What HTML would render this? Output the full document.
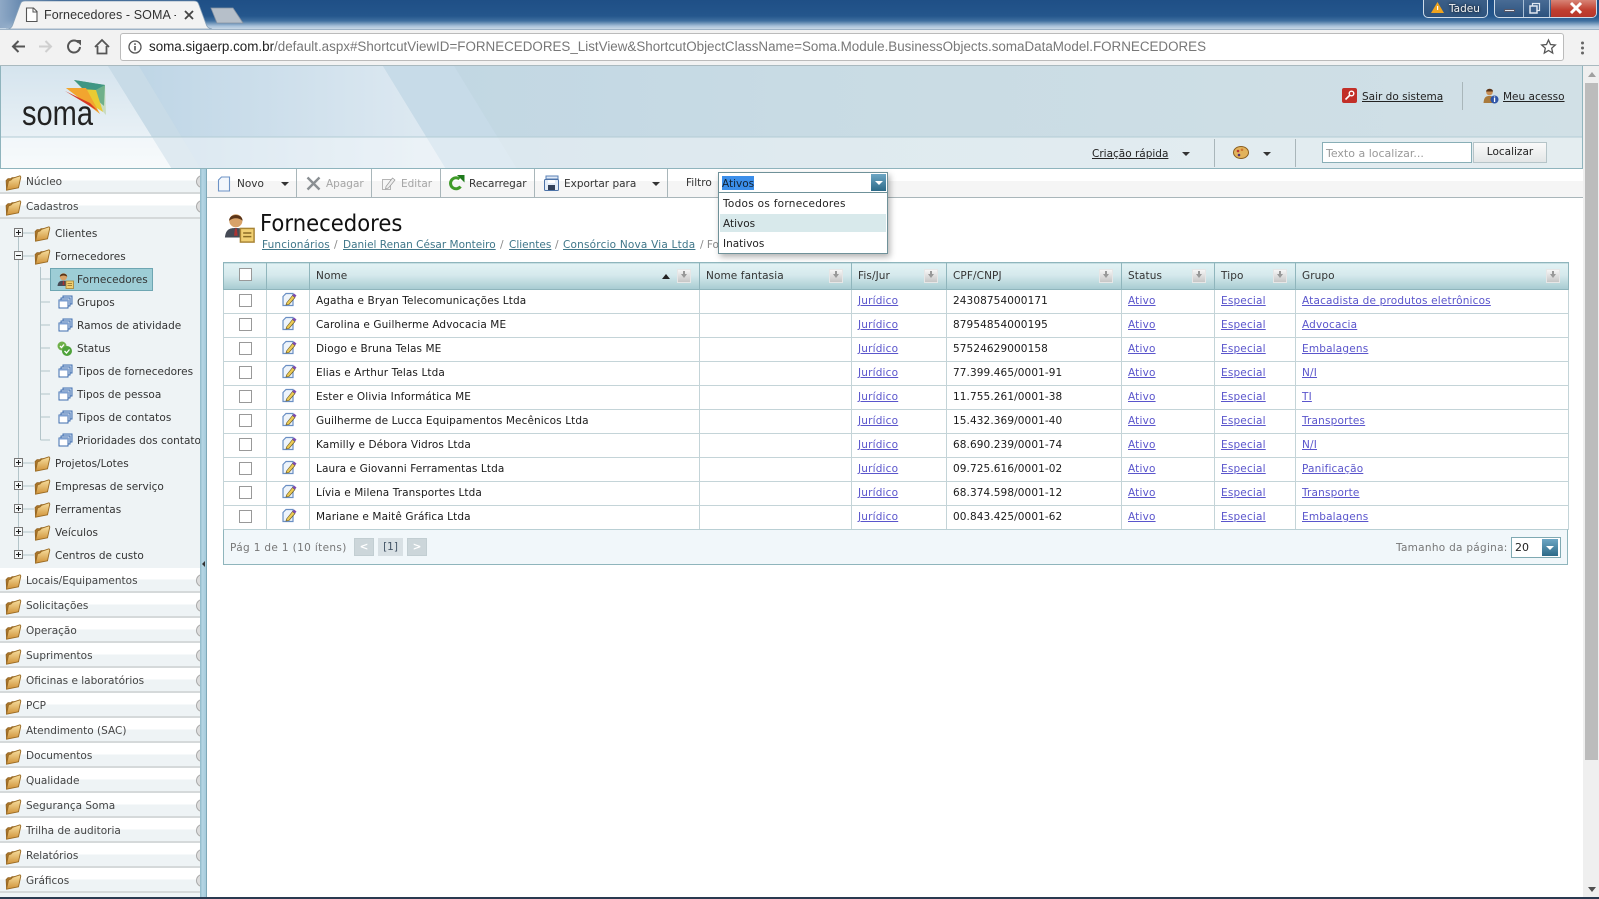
<!DOCTYPE html>
<html><head><meta charset="utf-8"><title>Fornecedores - SOMA</title>
<style>
*{box-sizing:border-box}
html,body{margin:0;padding:0;width:1599px;height:899px;overflow:hidden;background:#fff}
body{position:relative;font:10.5px "DejaVu Sans",sans-serif;color:#222}
.a{position:absolute;white-space:nowrap;line-height:14px}
.u{text-decoration:underline}
svg{position:absolute;overflow:visible}
.grp{position:absolute;left:0;width:200px;height:25px;border-bottom:2px solid #d5d9da;background:linear-gradient(#fff 0,#fff 50%,#eef3f5 50%,#eef3f5 100%)}
.grp span{position:absolute;left:26px;top:6px;line-height:14px;color:#444}
.grp svg{left:5px;top:6px}
.grp i{position:absolute;left:196px;top:6px;width:8px;height:13px;border-radius:7px 0 0 7px;background:#ddd;border:1px solid #aaa}
.t{position:absolute;white-space:nowrap;line-height:14px;color:#333}
.s .t,.s svg{margin-top:1px}
.sep{position:absolute;width:1px;background:#a9b6ba}
.arr{position:absolute;width:0;height:0;border-left:4px solid transparent;border-right:4px solid transparent;border-top:4px solid #333}
table{position:absolute;left:223px;top:262px;width:1345px;border-collapse:collapse;table-layout:fixed;font-size:10.5px;letter-spacing:.1px}
th{height:27px;padding:0 0 0 6px;text-align:left;font-weight:normal;background:linear-gradient(#e2f2f4,#d5e9ec 45%,#a7cbd1);border:1px solid #8fb5bc;position:relative;color:#333}
td{height:24px;padding:0 0 1px 6px;border:1px solid #c4d4d8;white-space:nowrap;color:#1a1a1a}
td a{color:#5a55cc;text-decoration:underline;letter-spacing:.18px}
th b{position:absolute;top:6px;right:8px;width:14px;height:14px;background:linear-gradient(#f6f6f6,#c6c6c6);border:1px solid #e6e6e6}
th b:after{content:"";position:absolute;left:3px;top:4px;width:0;height:0;border-left:3px solid transparent;border-right:3px solid transparent;border-top:4px solid #999}
th b:before{content:"";position:absolute;left:5px;top:1px;width:2px;height:3px;background:#999}
.c{display:block;position:relative;top:-1px;width:13px;height:13px;border:1px solid #999;background:#fff;margin-left:9px}
.e{position:relative;top:-2px;display:block;width:15px;height:15px;margin-left:9px}
</style></head><body>
<svg width="0" height="0" style="position:absolute"><defs>
<linearGradient id="fg" x1="0" y1="0" x2="0" y2="1"><stop offset="0" stop-color="#f8e0a0"/><stop offset="1" stop-color="#cf9238"/></linearGradient>
<linearGradient id="h1" x1="0" y1="0" x2="1" y2="0"><stop offset="0" stop-color="#bfd6e6"/><stop offset="1" stop-color="#dfeaf2"/></linearGradient>
<linearGradient id="h2" x1="0" y1="0" x2="1" y2="0"><stop offset="0" stop-color="#bad2e2"/><stop offset=".5" stop-color="#c8dbe4"/><stop offset="1" stop-color="#d1e0e6"/></linearGradient>
<linearGradient id="h3" x1="0" y1="0" x2="0" y2="1"><stop offset="0" stop-color="#d5e4ee"/><stop offset="1" stop-color="#f1f6f9"/></linearGradient>
<symbol id="folder" viewBox="0 0 17 17"><path d="M1.500 15 1 5.500 3 3.500 6 3.500 7 2.500 10 2.500 10 5z" fill="#a9742a" stroke="#8a5e20" stroke-width=".6"/><path d="M1.500 15.200 3.500 6 6 5 7.500 3.300 15 .8 15.800 2 13.500 12.800z" fill="url(#fg)" stroke="#9a6a22" stroke-width=".9" stroke-linejoin="round"/></symbol>
<symbol id="stack" viewBox="0 0 15 15"><rect x="5" y="1" width="9" height="8" fill="#cfdff2" stroke="#3f6cae"/><rect x="3" y="3" width="9" height="8" fill="#dfeaf7" stroke="#3f6cae"/><rect x="1" y="5" width="9" height="8" fill="#fff" stroke="#3f6cae"/><rect x="1" y="5" width="9" height="1.500" fill="#7d9fd0"/></symbol>
<symbol id="user" viewBox="0 0 17 17"><circle cx="6.500" cy="4.800" r="3.600" fill="#d8a268"/><path d="M2.800 4.800C2.800.6 10.200.6 10.200 4.800 8 3 5 3 2.800 4.800z" fill="#5a3418"/><path d="M.5 14C1 9.500 3 8.800 6.500 8.800S12 9.500 12.500 14z" fill="#454a55"/><path d="M6 9h1l.5 4h-2z" fill="#a33"/><rect x="9" y="9" width="7.500" height="7.500" fill="#f0cf72" stroke="#a88434" stroke-width=".8"/><path d="M10.500 11.500h4.500M10.500 13.500h4.500" stroke="#8a6c24" stroke-width=".8"/></symbol>
<symbol id="edit" viewBox="0 0 15 15"><path d="M1 4.500 4 1.500H11V13.500H1z" fill="#eef4fb" stroke="#6a8fc4" stroke-width="1.200"/><path d="M4.500 11 10.500 3.500 13 5.500 7 12.500 4 13z" fill="#edcb55" stroke="#5f5020" stroke-width=".6"/><path d="M10.500 3.500 12 1.500 14.500 3.500 13 5.500z" fill="#7d4bb0"/></symbol>
</defs></svg>

<!-- browser chrome -->
<div style="position:absolute;left:0;top:0;width:1599px;height:29px;background:linear-gradient(#1f4f86 0,#24568c 55%,#3f6f9f 72%,#a9c2da 90%,#c9d8e6 100%)"></div>
<div style="position:absolute;left:0;top:0;width:60px;height:28px;background:linear-gradient(90deg,#8fa9c6,rgba(143,169,198,0))"></div>
<svg style="left:0;top:0" width="260" height="30"><path d="M211 8 233 8 243 23 217 23z" fill="#b6bfc9" stroke="#8794a3" stroke-width=".8"/><path d="M6 29C11 29 12 27 13 24L20 5C21 2 22 1 25 1H194C197 1 198 2 199 5L206 24C207 27 208 28 212 29z" fill="#f2f2f2" stroke="#86a0b8" stroke-width=".8"/></svg>
<svg style="left:25px;top:7px" width="13" height="16"><path d="M1.500 1h7l3.500 3.500v10H1.500z" fill="#fff" stroke="#555" stroke-width="1.100"/><path d="M8 1v4h4" fill="none" stroke="#555"/></svg>
<div class="a" style="left:44px;top:8px;font:12.5px/14px 'Liberation Sans',sans-serif;color:#333;width:132px;overflow:hidden;letter-spacing:.1px">Fornecedores - SOMA - Sistema</div>
<svg style="left:184px;top:10px" width="10" height="10"><path d="M1 1 9 9M9 1 1 9" stroke="#444" stroke-width="1.800"/></svg>

<div style="position:absolute;left:1423px;top:-2px;width:65px;height:20px;border:1px solid #cfdcea;border-radius:0 0 5px 5px;background:linear-gradient(#3c5f88,#2e537d)"></div>
<svg style="left:1431px;top:2px" width="14" height="11"><path d="M6.500 0 13 11H0z" fill="#f0a41f"/><rect x="6" y="4" width="1.200" height="4" fill="#fff"/></svg>
<div class="a" style="left:1449px;top:2px;font:10.5px/14px 'DejaVu Sans',sans-serif;color:#f4f4f4;text-shadow:0 0 3px #000">Tadeu</div>
<div style="position:absolute;left:1494px;top:-2px;width:103px;height:20px;border:1px solid #cfdcea;border-radius:0 0 5px 5px;overflow:hidden;background:linear-gradient(#4a6d96,#2c527e)"><div style="position:absolute;left:28px;top:0;width:27px;height:20px;border-left:1px solid #a9bfd6;border-right:1px solid #a9bfd6"></div><div style="position:absolute;left:56px;top:0;width:47px;height:20px;background:linear-gradient(#d98a7c,#c13f30 55%,#b3332a)"></div></div>
<div style="position:absolute;left:1504px;top:9px;width:11px;height:3px;background:#dfe6ef;border:1px solid #556"></div>
<svg style="left:1529px;top:3px" width="12" height="11"><rect x="3.500" y=".5" width="7" height="7" fill="none" stroke="#dfe6ef" stroke-width="1.200"/><rect x="1" y="3" width="7" height="7" fill="#3b5f8a" stroke="#dfe6ef" stroke-width="1.500"/></svg>
<svg style="left:1569px;top:2px" width="14" height="12"><path d="M2 1 12 11M12 1 2 11" stroke="#fff" stroke-width="3"/></svg>

<div style="position:absolute;left:0;top:29px;width:1599px;height:37px;background:#f2f2f2;border-top:1px solid #9db2c6;border-bottom:1px solid #a9b9bf"></div>
<svg style="left:10px;top:38px" width="110" height="20">
<path d="M15 8.500H3M8.500 3 3 8.500 8.500 14" fill="none" stroke="#555" stroke-width="2"/>
<path d="M29 8.500h12M35.500 3 41 8.500 35.500 14" fill="none" stroke="#cfcfcf" stroke-width="2"/>
<g transform="translate(-4 0)"><path d="M72.500 4.500A6 6 0 1 0 74 9" fill="none" stroke="#555" stroke-width="2"/><path d="M69 2h6v5.500z" fill="#555"/></g>
<path d="M85 9 92 2l7 7M87.500 8v7.500h9V8" fill="none" stroke="#555" stroke-width="1.800"/></svg>
<div style="position:absolute;left:120px;top:33px;width:1444px;height:28px;background:#fff;border:1px solid #bbb;border-radius:3px"></div>
<svg style="left:128px;top:40px" width="14" height="14"><circle cx="7" cy="7" r="6" fill="none" stroke="#555" stroke-width="1.300"/><rect x="6.200" y="6" width="1.600" height="4.500" fill="#555"/><rect x="6.200" y="3.300" width="1.600" height="1.600" fill="#555"/></svg>
<div class="a" style="left:149px;top:39px;font:13.4px/16px 'Liberation Sans',sans-serif;color:#777;width:1065px"><span style="color:#222">soma.sigaerp.com.br</span>/default.aspx#ShortcutViewID=FORNECEDORES_ListView&amp;ShortcutObjectClassName=Soma.Module.BusinessObjects.somaDataModel.FORNECEDORES</div>
<svg style="left:1541px;top:39px" width="15" height="15"><path d="M7.500 1 9.500 5.500 14.300 6 10.700 9.200 11.700 14 7.500 11.500 3.300 14 4.300 9.200.7 6 5.500 5.500z" fill="none" stroke="#555" stroke-width="1.300"/></svg>
<svg style="left:1580px;top:40px" width="6" height="16"><circle cx="2.500" cy="3" r="1.500" fill="#666"/><circle cx="2.500" cy="8" r="1.500" fill="#666"/><circle cx="2.500" cy="13" r="1.500" fill="#666"/></svg>

<!-- header -->
<svg style="left:0;top:66px" width="1584" height="103">
<rect width="1584" height="103" fill="url(#h2)"/>
<path d="M0 0H108L172 103H0z" fill="url(#h3)"/>
<path d="M108 0H139L201 103H172z" fill="#c8dbe7"/>
<path d="M139 0H383L446 103H201z" fill="url(#h1)"/>
<path d="M383 0H454L517 103H446z" fill="#c7dbe8"/>
<rect y="71" width="1584" height="32" fill="#fff" fill-opacity=".42"/>
<path d="M0 71H1584" stroke="#b3ccd5"/><path d="M.5 0V102.500H1582.500V0" fill="none" stroke="#8fb4bd"/>
</svg>
<svg style="left:18px;top:76px" width="100" height="60">
<path d="M56 4 87 9 88 39z" fill="#c9dcc0"/><path d="M56 4 87 9 86 30z" fill="#6fb08a"/><path d="M56 4 87 9 70 18z" fill="#3f9684"/><path d="M48 12 78 14 85 36z" fill="#eacb33"/><path d="M48 12 68 12 82 38z" fill="#f2a52f"/><path d="M47 15 72 27 80 35z" fill="#d83a24"/>
<text x="4" y="49" font-family="Liberation Sans" font-size="35" fill="#222" textLength="71" lengthAdjust="spacingAndGlyphs">soma</text></svg>
<svg style="left:1342px;top:88px" width="15" height="15"><rect width="15" height="15" rx="2" fill="#c22f28"/><circle cx="9.500" cy="5.500" r="2.300" fill="none" stroke="#fff" stroke-width="1.400"/><path d="M8 7 3.500 11.500" stroke="#fff" stroke-width="1.600"/></svg>
<div class="a u" style="left:1362px;top:90px;color:#222">Sair do sistema</div>
<div class="sep" style="left:1462px;top:82px;height:28px"></div>
<svg style="left:1483px;top:88px" width="16" height="16"><circle cx="6.500" cy="4" r="3.300" fill="#c98f55"/><path d="M3 3.500C3.500 0 10 0 10 3.500z" fill="#5a3418"/><path d="M.5 15C1 9 3 8 6.500 8S11 9 12 15z" fill="#a97a3c"/><circle cx="11.500" cy="11.500" r="4" fill="#2e55a8"/><rect x="10.900" y="10" width="1.300" height="4" fill="#fff"/><rect x="10.900" y="8.500" width="1.300" height="1" fill="#fff"/></svg>
<div class="a u" style="left:1503px;top:90px;color:#222">Meu acesso</div>
<div class="a u" style="left:1092px;top:147px;color:#222">Criação rápida</div>
<div class="arr" style="left:1182px;top:152px"></div>
<div class="sep" style="left:1214px;top:139px;height:28px"></div>
<svg style="left:1233px;top:146px" width="16" height="13"><ellipse cx="8" cy="6.500" rx="7.500" ry="6" fill="#e2b35c" stroke="#8a5e20"/><circle cx="5" cy="5" r="1.300" fill="#b33"/><circle cx="9" cy="3.800" r="1.300" fill="#c73"/><circle cx="6" cy="9" r="1.300" fill="#537"/></svg>
<div class="arr" style="left:1263px;top:152px"></div>
<div class="sep" style="left:1295px;top:139px;height:28px"></div>
<div class="a" style="left:1322px;top:142px;width:150px;height:21px;background:#fff;border:1px solid #88aeb6;color:#999;padding:4px 3px;font-size:11px">Texto a localizar...</div>
<div class="a" style="left:1473px;top:142px;width:74px;height:21px;background:linear-gradient(#fafafa,#e3e6e7);border:1px solid #b5c4c8;text-align:center;padding-top:2px;color:#222">Localizar</div>

<!-- sidebar -->
<div style="position:absolute;left:0;top:169px;width:200px;height:730px;background:#eef3f5"></div>
<div class="grp" style="top:169px"><svg width="17" height="17"><use href="#folder"/></svg><span>Núcleo</span><i></i></div>
<div class="grp" style="top:194px"><svg width="17" height="17"><use href="#folder"/></svg><span>Cadastros</span><i></i></div>
<svg style="left:0;top:219px" width="200" height="349" fill="none">
<path d="M18.500 14V336M40.500 48V221M18.500 14H34M18.500 37H34M40.500 60H50M40.500 83H50M40.500 106H50M40.500 129H50M40.500 152H50M40.500 175H50M40.500 198H50M40.500 221H50M18.500 244H34M18.500 267H34M18.500 290H34M18.500 313H34M18.500 336H34" stroke="#b3c4c9"/>
<g fill="#f4f7f8" stroke="#777"><rect x="14.500" y="9.500" width="8" height="8"/><rect x="14.500" y="32.500" width="8" height="8"/><rect x="14.500" y="239.500" width="8" height="8"/><rect x="14.500" y="262.500" width="8" height="8"/><rect x="14.500" y="285.500" width="8" height="8"/><rect x="14.500" y="308.500" width="8" height="8"/><rect x="14.500" y="331.500" width="8" height="8"/></g>
<path d="M16 13.500h5M18.500 11v5M16 36.500h5M16 243.500h5M18.500 241v5M16 266.500h5M18.500 264v5M16 289.500h5M18.500 287v5M16 312.500h5M18.500 310v5M16 335.500h5M18.500 333v5" stroke="#222"/>
</svg>
<div style="position:absolute;left:50px;top:268px;width:103px;height:23px;background:#9dcdd6;border:1px solid #6ea6b2"></div>
<div class="s">
<svg style="left:34px;top:225px" width="17" height="17"><use href="#folder"/></svg><div class="t" style="left:55px;top:226px">Clientes</div>
<svg style="left:34px;top:248px" width="17" height="17"><use href="#folder"/></svg><div class="t" style="left:55px;top:249px">Fornecedores</div>
<svg style="left:57px;top:271px" width="17" height="17"><use href="#user"/></svg><div class="t" style="left:77px;top:272px">Fornecedores</div>
<svg style="left:58px;top:294px" width="15" height="15"><use href="#stack"/></svg><div class="t" style="left:77px;top:295px">Grupos</div>
<svg style="left:58px;top:317px" width="15" height="15"><use href="#stack"/></svg><div class="t" style="left:77px;top:318px">Ramos de atividade</div>
<svg style="left:57px;top:340px" width="16" height="16"><circle cx="5" cy="5" r="4.500" fill="#6fb04a"/><circle cx="10" cy="10" r="5" fill="#4ea23a"/><path d="M7.500 10l2 2 3-3.500M3 5l1.500 1.500 2.500-3" fill="none" stroke="#fff" stroke-width="1.300"/></svg><div class="t" style="left:77px;top:341px">Status</div>
<svg style="left:58px;top:363px" width="15" height="15"><use href="#stack"/></svg><div class="t" style="left:77px;top:364px">Tipos de fornecedores</div>
<svg style="left:58px;top:386px" width="15" height="15"><use href="#stack"/></svg><div class="t" style="left:77px;top:387px">Tipos de pessoa</div>
<svg style="left:58px;top:409px" width="15" height="15"><use href="#stack"/></svg><div class="t" style="left:77px;top:410px;letter-spacing:.1px">Tipos de contatos</div>
<svg style="left:58px;top:432px" width="15" height="15"><use href="#stack"/></svg><div class="t" style="left:77px;top:433px;width:123px;overflow:hidden">Prioridades dos contatos</div>
<svg style="left:34px;top:455px" width="17" height="17"><use href="#folder"/></svg><div class="t" style="left:55px;top:456px">Projetos/Lotes</div>
<svg style="left:34px;top:478px" width="17" height="17"><use href="#folder"/></svg><div class="t" style="left:55px;top:479px">Empresas de serviço</div>
<svg style="left:34px;top:501px" width="17" height="17"><use href="#folder"/></svg><div class="t" style="left:55px;top:502px">Ferramentas</div>
<svg style="left:34px;top:524px" width="17" height="17"><use href="#folder"/></svg><div class="t" style="left:55px;top:525px">Veículos</div>
<svg style="left:34px;top:547px" width="17" height="17"><use href="#folder"/></svg><div class="t" style="left:55px;top:548px">Centros de custo</div>
</div>
<div class="grp" style="top:568px"><svg width="17" height="17"><use href="#folder"/></svg><span>Locais/Equipamentos</span><i></i></div>
<div class="grp" style="top:593px"><svg width="17" height="17"><use href="#folder"/></svg><span>Solicitações</span><i></i></div>
<div class="grp" style="top:618px"><svg width="17" height="17"><use href="#folder"/></svg><span>Operação</span><i></i></div>
<div class="grp" style="top:643px"><svg width="17" height="17"><use href="#folder"/></svg><span>Suprimentos</span><i></i></div>
<div class="grp" style="top:668px"><svg width="17" height="17"><use href="#folder"/></svg><span>Oficinas e laboratórios</span><i></i></div>
<div class="grp" style="top:693px"><svg width="17" height="17"><use href="#folder"/></svg><span>PCP</span><i></i></div>
<div class="grp" style="top:718px"><svg width="17" height="17"><use href="#folder"/></svg><span>Atendimento (SAC)</span><i></i></div>
<div class="grp" style="top:743px"><svg width="17" height="17"><use href="#folder"/></svg><span>Documentos</span><i></i></div>
<div class="grp" style="top:768px"><svg width="17" height="17"><use href="#folder"/></svg><span>Qualidade</span><i></i></div>
<div class="grp" style="top:793px"><svg width="17" height="17"><use href="#folder"/></svg><span>Segurança Soma</span><i></i></div>
<div class="grp" style="top:818px"><svg width="17" height="17"><use href="#folder"/></svg><span>Trilha de auditoria</span><i></i></div>
<div class="grp" style="top:843px"><svg width="17" height="17"><use href="#folder"/></svg><span>Relatórios</span><i></i></div>
<div class="grp" style="top:868px"><svg width="17" height="17"><use href="#folder"/></svg><span>Gráficos</span><i></i></div>
<div style="position:absolute;left:200px;top:169px;width:7px;height:730px;background:linear-gradient(90deg,#8fb9c8,#b5d6e4 40%,#a5cadb);border-right:1px solid #7ea8b8"></div>
<div style="position:absolute;left:202px;top:561px;border-right:3px solid #333;border-top:3px solid transparent;border-bottom:3px solid transparent"></div>

<!-- toolbar -->
<div style="position:absolute;left:207px;top:169px;width:1376px;height:29px;background:linear-gradient(#fff 0,#fff 42%,#f5f5f5 42%,#f5f5f5 100%);border-bottom:1px solid #a9b6ba"></div>
<div class="sep" style="left:296px;top:169px;height:28px"></div><div class="sep" style="left:371px;top:169px;height:28px"></div><div class="sep" style="left:440px;top:169px;height:28px"></div><div class="sep" style="left:534px;top:169px;height:28px"></div><div class="sep" style="left:667px;top:169px;height:28px"></div>
<svg style="left:217px;top:176px" width="14" height="16"><path d="M1.500 4 4.500 1H12.500V15H1.500z" fill="#f3f7fc" stroke="#6d93c6" stroke-width="1.100"/></svg>
<div class="t" style="left:237px;top:177px">Novo</div><div class="arr" style="left:281px;top:182px"></div>
<svg style="left:306px;top:176px" width="15" height="15"><path d="M1.500 1.500 13.500 13.500M13.500 1.500 1.500 13.500" stroke="#8a8f92" stroke-width="2.400"/></svg>
<div class="t" style="left:326px;top:177px;color:#a5a5a5">Apagar</div>
<svg style="left:381px;top:176px" width="15" height="15"><path d="M1.500 3.500h8v10h-8z" fill="#f6f6f6" stroke="#b5b5b5"/><path d="M5 10.500 11.500 2 14 4 7.500 12l-3 1z" fill="#eee" stroke="#999" stroke-width=".7"/></svg>
<div class="t" style="left:401px;top:177px;color:#a5a5a5">Editar</div>
<svg style="left:448px;top:175px" width="17" height="16"><path d="M12.500 11.500A5.500 5.500 0 1 1 11.500 4" fill="none" stroke="#3f9a28" stroke-width="3"/><path d="M9 0h7.500v7.500z" fill="#1f7a1c"/></svg>
<div class="t" style="left:469px;top:177px">Recarregar</div>
<svg style="left:543px;top:175px" width="17" height="17"><rect x="3" y="1" width="12" height="3" fill="#dfe9f6" stroke="#5a80b5"/><rect x="1.500" y="4.500" width="14" height="11" rx="1" fill="#e4edf8" stroke="#4d73a8"/><rect x="5" y="10" width="7" height="5" fill="#33415a"/><rect x="5" y="5" width="7" height="3" fill="#fff"/></svg>
<div class="t" style="left:564px;top:177px">Exportar para</div><div class="arr" style="left:652px;top:182px"></div>
<div class="t" style="left:686px;top:176px">Filtro</div>

<!-- title -->
<svg style="left:224px;top:212px" width="31" height="31" viewBox="0 0 17 17"><use href="#user"/></svg>
<div class="a" style="left:260px;top:209px;font-size:23px;line-height:30px;color:#111;transform:scaleX(.92);transform-origin:0 0">Fornecedores</div>
<div class="a u" style="left:262px;top:238px;color:#3f7689;letter-spacing:.15px">Funcionários</div>
<div class="a" style="left:334px;top:238px;color:#888">/</div>
<div class="a u" style="left:343px;top:238px;color:#3f7689">Daniel Renan César Monteiro</div>
<div class="a" style="left:500px;top:238px;color:#888">/</div>
<div class="a u" style="left:509px;top:238px;color:#3f7689">Clientes</div>
<div class="a" style="left:555px;top:238px;color:#888">/</div>
<div class="a u" style="left:563px;top:238px;color:#3f7689;letter-spacing:.2px">Consórcio Nova Via Ltda</div>
<div class="a" style="left:700px;top:238px;color:#888">/ Fornecedores</div>

<!-- grid -->
<table>
<colgroup><col style="width:43px"><col style="width:43px"><col style="width:390px"><col style="width:152px"><col style="width:95px"><col style="width:175px"><col style="width:93px"><col style="width:81px"><col style="width:273px"></colgroup>
<tr><th style="padding:0"><span class="c" style="margin-left:15px;margin-top:-1px"></span></th><th></th><th>Nome<b></b><span style="position:absolute;right:29px;top:11px;border-left:4px solid transparent;border-right:4px solid transparent;border-bottom:5px solid #222"></span></th><th>Nome fantasia<b></b></th><th>Fis/Jur<b></b></th><th>CPF/CNPJ<b></b></th><th>Status<b></b></th><th>Tipo<b></b></th><th>Grupo<b></b></th></tr>
<tr><td><span class="c"></span></td><td><svg class="e"><use href="#edit"/></svg></td><td>Agatha e Bryan Telecomunicações Ltda</td><td></td><td><a>Jurídico</a></td><td>24308754000171</td><td><a>Ativo</a></td><td><a>Especial</a></td><td><a>Atacadista de produtos eletrônicos</a></td></tr>
<tr><td><span class="c"></span></td><td><svg class="e"><use href="#edit"/></svg></td><td>Carolina e Guilherme Advocacia ME</td><td></td><td><a>Jurídico</a></td><td>87954854000195</td><td><a>Ativo</a></td><td><a>Especial</a></td><td><a>Advocacia</a></td></tr>
<tr><td><span class="c"></span></td><td><svg class="e"><use href="#edit"/></svg></td><td>Diogo e Bruna Telas ME</td><td></td><td><a>Jurídico</a></td><td>57524629000158</td><td><a>Ativo</a></td><td><a>Especial</a></td><td><a>Embalagens</a></td></tr>
<tr><td><span class="c"></span></td><td><svg class="e"><use href="#edit"/></svg></td><td>Elias e Arthur Telas Ltda</td><td></td><td><a>Jurídico</a></td><td>77.399.465/0001-91</td><td><a>Ativo</a></td><td><a>Especial</a></td><td><a>N/I</a></td></tr>
<tr><td><span class="c"></span></td><td><svg class="e"><use href="#edit"/></svg></td><td>Ester e Olivia Informática ME</td><td></td><td><a>Jurídico</a></td><td>11.755.261/0001-38</td><td><a>Ativo</a></td><td><a>Especial</a></td><td><a>TI</a></td></tr>
<tr><td><span class="c"></span></td><td><svg class="e"><use href="#edit"/></svg></td><td>Guilherme de Lucca Equipamentos Mecênicos Ltda</td><td></td><td><a>Jurídico</a></td><td>15.432.369/0001-40</td><td><a>Ativo</a></td><td><a>Especial</a></td><td><a>Transportes</a></td></tr>
<tr><td><span class="c"></span></td><td><svg class="e"><use href="#edit"/></svg></td><td>Kamilly e Débora Vidros Ltda</td><td></td><td><a>Jurídico</a></td><td>68.690.239/0001-74</td><td><a>Ativo</a></td><td><a>Especial</a></td><td><a>N/I</a></td></tr>
<tr><td><span class="c"></span></td><td><svg class="e"><use href="#edit"/></svg></td><td>Laura e Giovanni Ferramentas Ltda</td><td></td><td><a>Jurídico</a></td><td>09.725.616/0001-02</td><td><a>Ativo</a></td><td><a>Especial</a></td><td><a>Panificação</a></td></tr>
<tr><td><span class="c"></span></td><td><svg class="e"><use href="#edit"/></svg></td><td>Lívia e Milena Transportes Ltda</td><td></td><td><a>Jurídico</a></td><td>68.374.598/0001-12</td><td><a>Ativo</a></td><td><a>Especial</a></td><td><a>Transporte</a></td></tr>
<tr><td><span class="c"></span></td><td><svg class="e"><use href="#edit"/></svg></td><td>Mariane e Maitê Gráfica Ltda</td><td></td><td><a>Jurídico</a></td><td>00.843.425/0001-62</td><td><a>Ativo</a></td><td><a>Especial</a></td><td><a>Embalagens</a></td></tr>
</table>
<div style="position:absolute;left:223px;top:529px;width:1345px;height:36px;background:#f1f7fa;border:1px solid #8fb5bc;border-top:1px solid #b9cfd4"></div>
<div class="a" style="left:230px;top:541px;color:#777;letter-spacing:.35px">Pág 1 de 1 (10 ítens)</div>
<div class="a" style="left:354px;top:538px;width:20px;height:18px;background:#ccd6da;border:1px solid #c2ced2;color:#fff;text-align:center;font-weight:bold;line-height:16px">&lt;</div>
<div class="a" style="left:378px;top:538px;width:25px;height:18px;background:#d8e0e4;text-align:center;color:#456;line-height:18px">[1]</div>
<div class="a" style="left:407px;top:538px;width:20px;height:18px;background:#ccd6da;border:1px solid #c2ced2;color:#fff;text-align:center;font-weight:bold;line-height:16px">&gt;</div>
<div class="a" style="left:1396px;top:541px;color:#777;letter-spacing:.28px">Tamanho da página:</div>
<div class="a" style="left:1511px;top:537px;width:50px;height:21px;background:#fff;border:1px solid #7fa9b2;padding:3px 0 0 3px;color:#222;font-size:11px">20</div>
<div style="position:absolute;left:1542px;top:539px;width:16px;height:17px;background:linear-gradient(#6da6c4,#2d6a88)"></div>
<div style="position:absolute;left:1546px;top:546px;border-left:4px solid transparent;border-right:4px solid transparent;border-top:4px solid #fff"></div>

<!-- dropdown -->
<div style="position:absolute;left:718px;top:172px;width:170px;height:82px;background:#fff;border:1px solid #6f9199;box-shadow:2px 3px 6px rgba(0,0,0,.3)"></div>
<div style="position:absolute;left:718px;top:192px;width:170px;height:1px;background:#6f9199"></div>
<div style="position:absolute;left:722px;top:176px;width:32px;height:14px;background:#3b8eea"></div>
<div class="a" style="left:722px;top:177px;color:#123">Ativos</div>
<div style="position:absolute;left:871px;top:174px;width:15px;height:17px;background:linear-gradient(#6da6c4,#2d6a88)"></div>
<div style="position:absolute;left:875px;top:181px;border-left:4px solid transparent;border-right:4px solid transparent;border-top:4px solid #fff"></div>
<div style="position:absolute;left:720px;top:214px;width:166px;height:18px;background:#d8e9eb"></div>
<div class="a" style="left:723px;top:197px;color:#222;letter-spacing:.28px">Todos os fornecedores</div>
<div class="a" style="left:723px;top:217px;color:#222">Ativos</div>
<div class="a" style="left:723px;top:237px;color:#222">Inativos</div>

<!-- scrollbar -->
<div style="position:absolute;left:1583px;top:66px;width:16px;height:833px;background:#efefef"></div>
<div style="position:absolute;left:1585px;top:83px;width:13px;height:677px;background:#bcbcbc"></div>
<div style="position:absolute;left:1588px;top:72px;border-left:4px solid transparent;border-right:4px solid transparent;border-bottom:5px solid #a0a0a0"></div>
<div style="position:absolute;left:1588px;top:887px;border-left:4px solid transparent;border-right:4px solid transparent;border-top:5px solid #505050"></div>
<div style="position:absolute;left:0;top:897px;width:1599px;height:2px;background:#2a3a50"></div>
</body></html>
